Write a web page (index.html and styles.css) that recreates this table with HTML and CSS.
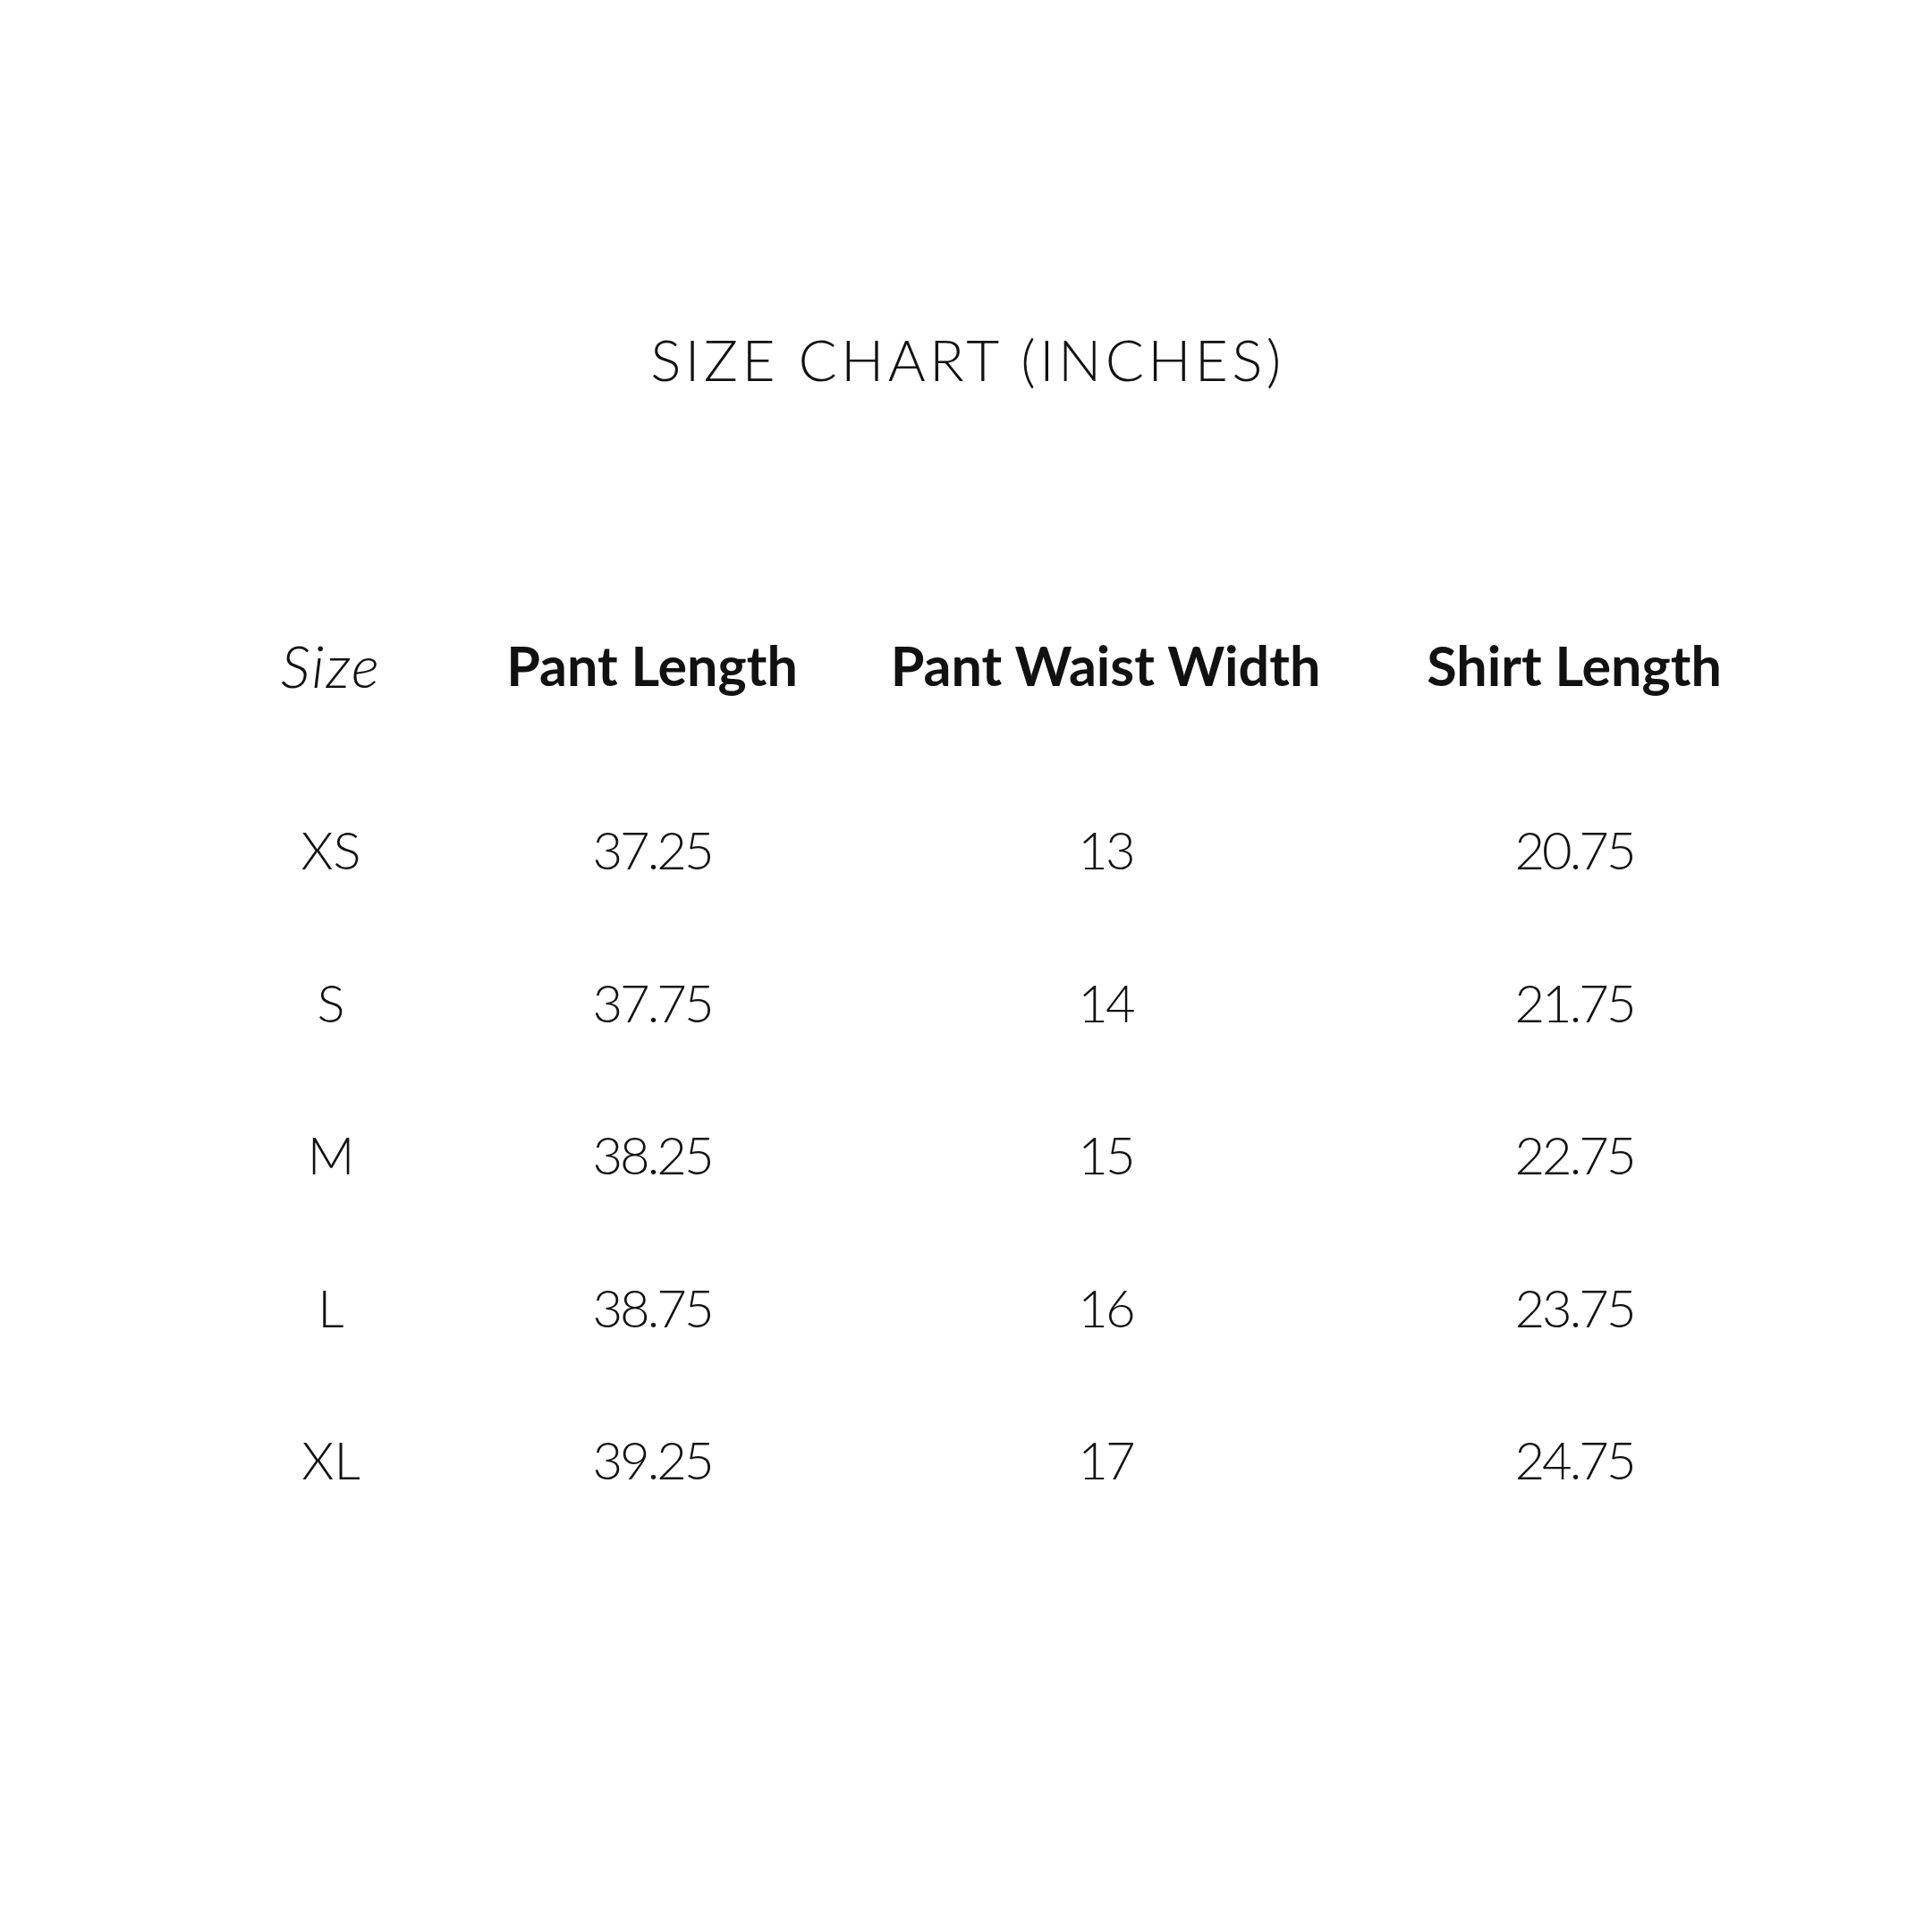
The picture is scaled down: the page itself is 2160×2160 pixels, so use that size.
FILE: index.html
```html
<!DOCTYPE html>
<html>
<head>
<meta charset="utf-8">
<link rel="stylesheet" href="styles.css">
</head>
<body>
<main class="page">
  <h1 class="title">SIZE CHART (INCHES)</h1>
  <div class="chart">
    <div class="cell head size-head">Size</div>
    <div class="cell head">Pant Length</div>
    <div class="cell head">Pant Waist Width</div>
    <div class="cell head">Shirt Length</div>

    <div class="cell">XS</div><div class="cell num">37.25</div><div class="cell num">13</div><div class="cell num">20.75</div>
    <div class="cell">S</div><div class="cell num">37.75</div><div class="cell num">14</div><div class="cell num">21.75</div>
    <div class="cell">M</div><div class="cell num">38.25</div><div class="cell num">15</div><div class="cell num">22.75</div>
    <div class="cell">L</div><div class="cell num">38.75</div><div class="cell num">16</div><div class="cell num">23.75</div>
    <div class="cell">XL</div><div class="cell num">39.25</div><div class="cell num">17</div><div class="cell num">24.75</div>
  </div>
</main>
</body>
</html>
```

FILE: styles.css
```css
html, body {
  margin: 0;
  padding: 0;
  background: #ffffff;
}

.page {
  width: 2160px;
  height: 2160px;
  box-sizing: border-box;
  padding-top: 362px;
  font-family: "Lato", "Liberation Sans", sans-serif;
  color: #111111;
}

.title {
  margin: 0;
  text-align: center;
  font-size: 64px;
  line-height: 80px;
  font-weight: 300;
  letter-spacing: 4.3px;
  padding-left: 4px;
}

.chart {
  margin-top: 262px;
  margin-left: 220px;
  display: grid;
  grid-template-columns: 300px 418px 596px 452px;
  grid-auto-rows: 170.5px;
  grid-template-rows: 206px;
}

.cell {
  text-align: center;
  font-size: 58px;
  line-height: 80px;
  font-weight: 300;
}

.num {
  letter-spacing: -3px;
}

.head {
  font-weight: 700;
  font-size: 61px;
}

.size-head {
  font-weight: 300;
  font-style: italic;
  font-size: 66px;
  letter-spacing: 2px;
}
```
